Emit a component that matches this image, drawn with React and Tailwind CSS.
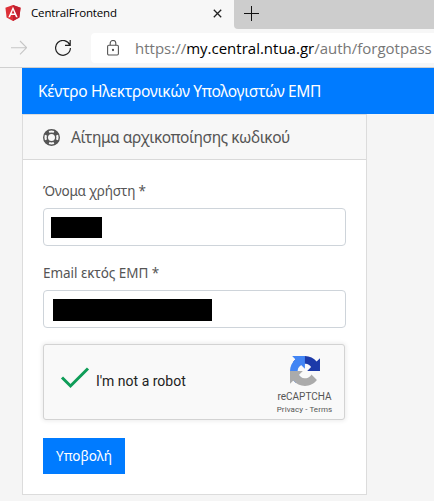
function AngularLogo() {
  return (
    <svg className="block h-4 w-4 shrink-0" viewBox="0 0 16 16">
      <path d="M8 0 L15.6 2.7 L14.4 12.5 L8 16 L1.6 12.5 L0.4 2.7Z" fill="#dd2f36" />
      <path d="M8 0 L15.6 2.7 L14.4 12.5 L8 16Z" fill="#c3202f" />
      <path d="M8 1.8 L3.3 12.2 H5 L6 9.9 H10 L11 12.2 H12.7Z M8 5.1 L9.4 8.4 H6.6Z" fill="#fff" fillRule="evenodd" />
    </svg>
  );
}

function LifeRing() {
  return (
    <svg className="block h-[17px] w-[17px] shrink-0" viewBox="0 0 17 17" fill="none" stroke="#555">
      <circle cx="8.5" cy="8.5" r="7.8" strokeWidth="1.4" />
      <circle cx="8.5" cy="8.5" r="4.2" strokeWidth="1.4" />
      <circle cx="8.5" cy="8.5" r="6" strokeWidth="4" pathLength="8" strokeDasharray="0.9 1.1" strokeDashoffset="-0.55" />
    </svg>
  );
}

function RecaptchaLogo() {
  return (
    <svg className="block h-[30px] w-[30px]" viewBox="0 0 64 64">
      <path fill="#1c3aa9" d="M64 31.955l-.033-1.37V4.687l-7.16 7.16C50.948 4.674 42.033.093 32.05.093c-10.4 0-19.622 4.96-25.458 12.64l11.736 11.86a15.55 15.55 0 0 1 4.754-5.334c2.05-1.6 4.952-2.906 8.968-2.906.485 0 .86.057 1.135.163 4.976.393 9.288 3.14 11.828 7.124l-8.307 8.307L64 31.953" />
      <path fill="#4285f4" d="M31.862.094l-1.37.033H4.594l7.16 7.16C4.58 13.147 0 22.06 0 32.046c0 10.4 4.96 19.622 12.64 25.458L24.5 45.768a15.55 15.55 0 0 1-5.334-4.754c-1.6-2.05-2.906-4.952-2.906-8.968 0-.485.057-.86.163-1.135.393-4.976 3.14-9.288 7.124-11.828l8.307 8.307L31.86.095" />
      <path fill="#ababab" d="M.001 32.045l.033 1.37v25.898l7.16-7.16c5.86 7.173 14.774 11.754 24.76 11.754 10.4 0 19.622-4.96 25.458-12.64l-11.736-11.86a15.55 15.55 0 0 1-4.754 5.334c-2.05 1.6-4.952 2.906-8.968 2.906-.485 0-.86-.057-1.135-.163-4.976-.393-9.288-3.14-11.828-7.124l8.307-8.307c-10.522.04-22.4.066-27.295-.005" />
    </svg>
  );
}

function TabStrip() {
  return (
    <div className="flex h-[29px] bg-[#f7f7f7]">
      <div className="flex w-[234px] shrink-0 items-center pb-[3px] pl-[5px]">
        <AngularLogo />
        <span className="ml-[10px] w-[182px] font-['Open_Sans',sans-serif] text-[11.5px] leading-4 tracking-[-0.15px] text-black">CentralFrontend</span>
        <svg className="block h-[9px] w-[9px] shrink-0" viewBox="0 0 9 9" stroke="#222" strokeWidth="1.3">
          <path d="M0.8 0.8 L8.2 8.2 M8.2 0.8 L0.8 8.2" />
        </svg>
      </div>
      <div className="flex flex-1 items-center rounded-bl-[4px] bg-[#cdcdcd] pb-[3px] pl-[10px]">
        <svg className="block h-[15px] w-[15px]" viewBox="0 0 15 15" stroke="#111" strokeWidth="1">
          <path d="M7.5 0 V15 M0 7.5 H15" />
        </svg>
      </div>
    </div>
  );
}

function AddressRow() {
  return (
    <div className="flex h-[39px] border-b border-[#d0d0d0] bg-[#f7f7f7] pt-1">
      <svg className="mt-[7px] ml-[11px] block h-4 w-4 shrink-0" viewBox="0 0 16 16" fill="none" stroke="#c6c6c6" strokeWidth="1.1">
        <path d="M0 7.7 H15.5 M9 1 L15.6 7.7 L9 14.4" />
      </svg>
      <svg className="mt-[7px] ml-[28px] block h-4 w-4 shrink-0" viewBox="0 0 16 16" fill="none" stroke="#222" strokeWidth="1.2">
        <path d="M14.9 5.2 A7.4 7.4 0 1 0 15.4 8 M15.2 0 V5.3 H10" />
      </svg>
      <div className="ml-5 flex h-[30px] flex-1 items-center overflow-hidden rounded-l-[4px] bg-white pl-4">
        <svg className="mb-[1px] block h-4 w-3 shrink-0" viewBox="0 0 12 16" fill="none" stroke="#555" strokeWidth="1.1">
          <rect x="0.6" y="5.2" width="10.8" height="9.8" rx="1.2" />
          <path d="M3.2 5.2 V3.3 A2.8 2.8 0 0 1 8.8 3.3 V5.2" />
          <circle cx="6" cy="10" r="0.6" fill="#555" />
        </svg>
        <span className="ml-[16px] font-['Open_Sans',sans-serif] text-[15px] leading-5 whitespace-nowrap text-[#777]">
          https://<span className="text-black">my.central.ntua.gr</span>/auth/forgotpass
        </span>
      </div>
    </div>
  );
}

function Recaptcha() {
  return (
    <div className="mt-4 flex h-[76px] w-[302px] rounded-[3px] border border-[#d3d3d3] bg-[#f9f9f9] font-[Roboto,sans-serif] shadow-[0_0_4px_1px_rgba(0,0,0,0.08)]">
      <svg className="mt-[21px] ml-[16px] block h-[24px] w-[30px] shrink-0" viewBox="0 0 30 24" fill="none" stroke="#0f9d58" strokeWidth="3">
        <path d="M2 11.5 L10.5 20 L28 2.5" />
      </svg>
      <span className="mt-[28px] ml-[6px] w-[170px] text-[14px] leading-[17px] text-[#222]">I'm not a robot</span>
      <div className="mt-[11px] flex w-[76px] flex-col items-center pl-[1px] text-[#555]">
        <RecaptchaLogo />
        <span className="mt-[5px] text-[10px] leading-[12px]">reCAPTCHA</span>
        <span className="mt-[1px] text-[8px] leading-[11px] tracking-[0.08px] whitespace-pre">Privacy - Terms</span>
      </div>
    </div>
  );
}

export default function App() {
  return (
    <div className="h-[501px] w-[434px] overflow-hidden bg-[#f5f5f5] font-['Noto_Sans',sans-serif] text-[#555]">
      <TabStrip />
      <AddressRow />
      <main className="ml-[22px]">
        <header className="flex h-[46px] items-center bg-[#007bff] pl-4">
          <h1 className="text-[15.5px] leading-5 tracking-[-0.32px] text-white">Κέντρο Ηλεκτρονικών Υπολογιστών ΕΜΠ</h1>
        </header>
        <section className="h-[381px] w-[345px] border border-[#dcdcdc] bg-white">
          <div className="flex h-[45px] items-center border-b border-[#d9d9d9] bg-[#f7f7f7] pl-5">
            <LifeRing />
            <h2 className="ml-[11px] text-[15.5px] leading-5 tracking-[-0.46px]">Αίτημα αρχικοποίησης κωδικού</h2>
          </div>
          <form className="flex flex-col items-start px-5 pt-[20px]">
            <label className="h-[28px] text-[13.5px] leading-[22px] tracking-[-0.22px]">Όνομα χρήστη *</label>
            <div className="h-[38px] w-[303px] rounded-[4px] border border-[#ced4da] pt-2 pl-[7px]">
              <div className="h-[21px] w-[51px] bg-black" />
            </div>
            <label className="mt-4 h-[28px] text-[13.5px] leading-[22px] tracking-[-0.05px]">Email εκτός ΕΜΠ *</label>
            <div className="h-[38px] w-[303px] rounded-[4px] border border-[#ced4da] pt-2 pl-[9px]">
              <div className="h-[22px] w-[159px] bg-black" />
            </div>
            <Recaptcha />
            <button type="button" className="mt-[18px] h-[36px] w-[82px] bg-[#007bff] pb-[1px] text-[13.5px] leading-5 text-white">Υποβολή</button>
          </form>
        </section>
      </main>
    </div>
  );
}
